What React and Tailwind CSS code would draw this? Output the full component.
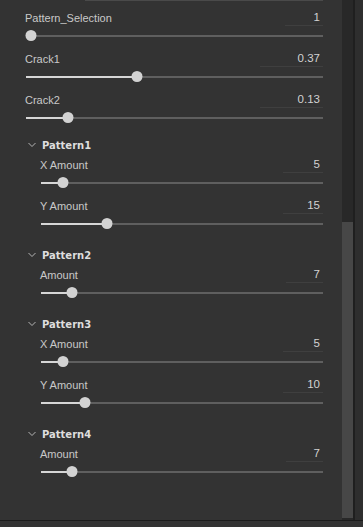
import React from 'react';

const params = [
  { label: 'Pattern_Selection', value: '1', frac: 0, valW: 38 },
  { label: 'Crack1', value: '0.37', frac: 0.37, valW: 63 },
  { label: 'Crack2', value: '0.13', frac: 0.13, valW: 63 },
];

const groups = [
  {
    name: 'Pattern1',
    items: [
      { label: 'X Amount', value: '5', frac: 0.0625, valW: 40 },
      { label: 'Y Amount', value: '15', frac: 0.224, valW: 40 },
    ],
  },
  {
    name: 'Pattern2',
    items: [{ label: 'Amount', value: '7', frac: 0.0956, valW: 37 }],
  },
  {
    name: 'Pattern3',
    items: [
      { label: 'X Amount', value: '5', frac: 0.0625, valW: 40 },
      { label: 'Y Amount', value: '10', frac: 0.143, valW: 40 },
    ],
  },
  {
    name: 'Pattern4',
    items: [{ label: 'Amount', value: '7', frac: 0.0956, valW: 37 }],
  },
];

const Slider = ({ frac }) => {
  // thumb travels from 5px to (width - 5px)
  const pos = `calc(5px + (100% - 10px) * ${frac})`;
  return (
    <div className="relative h-[17px] flex items-center">
      <div className="h-[2px] w-full bg-[#5f5f5f]" />
      <div className="absolute left-0 h-[2px] bg-[#d6d6d6]" style={{ width: pos }} />
      <div
        className="absolute w-[11px] h-[11px] rounded-full bg-[#d2d2d2] -translate-x-1/2"
        style={{ left: pos }}
      />
    </div>
  );
};

const Param = ({ label, value, frac, valW, indent }) => (
  <div className={`mb-[6px] ${indent ? 'pl-[40px]' : 'pl-[25px]'} pr-[19px]`}>
    <div className="flex h-[18px] items-start">
      <div className="flex-1 h-[18px] flex items-center text-[11px] text-[#c9c9c9]">{label}</div>
      <div
        className="h-[17px] border-b border-[#3f3f3f] flex items-center justify-end pr-[3px] pt-[2px] text-[11.5px] text-[#d2d2d2]"
        style={{ width: valW }}
      >
        {value}
      </div>
    </div>
    <div className="pl-px">
      <Slider frac={frac} />
    </div>
  </div>
);

const Chevron = () => (
  <svg width="8" height="6" viewBox="0 0 8 6" className="mr-[6px]">
    <path d="M0.5 1 L4 4.5 L7.5 1" fill="none" stroke="#b4b4b4" strokeWidth="1" />
  </svg>
);

export default function App() {
  return (
    <div
      className="w-[363px] h-[527px] bg-[#333333] flex flex-col overflow-hidden"
      style={{ fontFamily: '"Liberation Sans", Arial, sans-serif' }}
    >
      <div className="flex h-[520px]">
        <div className="w-[342px] flex flex-col">
          <div className="h-px ml-[85px] w-[238px] bg-[#4a4a4a]" />
          <div className="pt-[8px] flex flex-col">
            {params.map((p) => (
              <Param key={p.label} {...p} />
            ))}
            {groups.map((g, i) => (
              <div key={g.name} className={`flex flex-col ${i === 0 ? 'mt-[4px]' : 'mt-[8px]'}`}>
                <div className="flex items-center h-[18px] pl-[28px] mb-[2px]">
                  <Chevron />
                  <span
                    className="text-[10px] font-bold text-[#dedede]"
                    style={{ fontFamily: '"DejaVu Sans", Verdana, sans-serif' }}
                  >
                    {g.name}
                  </span>
                </div>
                {g.items.map((it, j) => (
                  <Param key={j} {...it} indent />
                ))}
              </div>
            ))}
          </div>
        </div>
        <div className="w-[11px] bg-[#282828] flex flex-col">
          <div className="h-[222px]" />
          <div className="h-[296px] bg-[#474747]" />
        </div>
        <div className="w-[2px] bg-[#1f1f1f]" />
        <div className="w-[8px] bg-[#2e2e2e]" />
      </div>
      <div className="h-px bg-[#1c1c1c]" />
      <div className="flex-1 bg-[#333333]" />
    </div>
  );
}
